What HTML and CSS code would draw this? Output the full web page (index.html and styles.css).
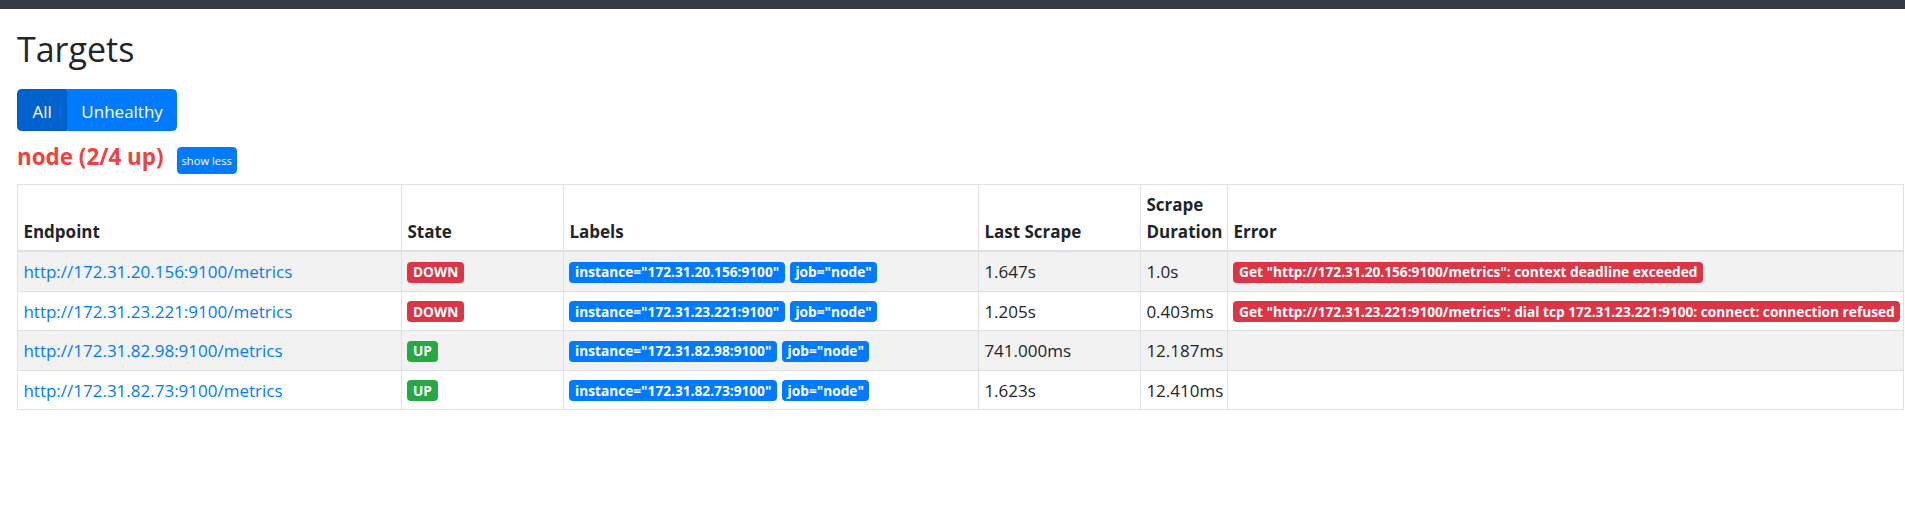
FILE: index.html
```html
<!DOCTYPE html>
<html lang="en">
<head>
<meta charset="utf-8">
<title>Targets</title>
<link rel="stylesheet" href="styles.css">
</head>
<body>
<div class="navbar"></div>
<div class="container">
  <h2 class="page-title">Targets</h2>
  <div class="btn-group">
    <button class="btn btn-active">All</button><button class="btn">Unhealthy</button>
  </div>
  <div class="pool-header">
    <span class="pool-title">node (2/4 up)</span>
    <button class="btn-xs">show less</button>
  </div>
  <table class="targets">
    <colgroup>
      <col class="c-endpoint">
      <col class="c-state">
      <col class="c-labels">
      <col class="c-last">
      <col class="c-dur">
      <col class="c-error">
    </colgroup>
    <thead>
      <tr>
        <th>Endpoint</th>
        <th>State</th>
        <th>Labels</th>
        <th>Last Scrape</th>
        <th>Scrape Duration</th>
        <th>Error</th>
      </tr>
    </thead>
    <tbody>
      <tr>
        <td><a href="#">http://172.31.20.156:9100/metrics</a></td>
        <td><span class="badge badge-danger">DOWN</span></td>
        <td><span class="badge badge-primary">instance="172.31.20.156:9100"</span><span class="badge badge-primary">job="node"</span></td>
        <td>1.647s</td>
        <td>1.0s</td>
        <td><span class="badge badge-danger">Get "http://172.31.20.156:9100/metrics": context deadline exceeded</span></td>
      </tr>
      <tr>
        <td><a href="#">http://172.31.23.221:9100/metrics</a></td>
        <td><span class="badge badge-danger">DOWN</span></td>
        <td><span class="badge badge-primary">instance="172.31.23.221:9100"</span><span class="badge badge-primary">job="node"</span></td>
        <td>1.205s</td>
        <td>0.403ms</td>
        <td><span class="badge badge-danger">Get "http://172.31.23.221:9100/metrics": dial tcp 172.31.23.221:9100: connect: connection refused</span></td>
      </tr>
      <tr>
        <td><a href="#">http://172.31.82.98:9100/metrics</a></td>
        <td><span class="badge badge-success">UP</span></td>
        <td><span class="badge badge-primary">instance="172.31.82.98:9100"</span><span class="badge badge-primary">job="node"</span></td>
        <td>741.000ms</td>
        <td>12.187ms</td>
        <td></td>
      </tr>
      <tr>
        <td><a href="#">http://172.31.82.73:9100/metrics</a></td>
        <td><span class="badge badge-success">UP</span></td>
        <td><span class="badge badge-primary">instance="172.31.82.73:9100"</span><span class="badge badge-primary">job="node"</span></td>
        <td>1.623s</td>
        <td>12.410ms</td>
        <td></td>
      </tr>
    </tbody>
  </table>
</div>
</body>
</html>
```
FILE: styles.css
```css
* { box-sizing: border-box; }

html, body {
  margin: 0;
  padding: 0;
  background: #ffffff;
}

body {
  font-family: "Open Sans", "Noto Sans", "Liberation Sans", sans-serif;
  font-size: 17px;
  line-height: 27px;
  color: #212529;
}

.navbar {
  height: 9px;
  background: #343a40;
}

.container {
  padding: 0 17px;
}

.page-title {
  margin: 20px 0 19px;
  font-size: 34px;
  line-height: 41px;
  font-weight: 400;
  color: #212529;
}

.btn-group {
  display: flex;
}

.btn {
  font-family: inherit;
  font-size: 17px;
  line-height: 27px;
  color: #ffffff;
  background: #007bff;
  border: 1px solid #007bff;
  padding: 8px 13px 5px;
  margin: 0;
  cursor: pointer;
}

.btn:first-child {
  border-radius: 4.5px 0 0 4.5px;
  padding-left: 14.5px;
  padding-right: 14.5px;
}

.btn:last-child {
  border-radius: 0 4.5px 4.5px 0;
}

.btn-active {
  background: #0062cc;
  border-color: #005cbf;
}

.pool-header {
  display: flex;
  align-items: baseline;
  gap: 13px;
  margin-top: 12px;
}

.pool-title {
  font-size: 22.4px;
  line-height: 27px;
  font-weight: 700;
  color: #f24141;
}

.btn-xs {
  font-family: inherit;
  font-size: 11.2px;
  line-height: 17px;
  padding: 4px 4px;
  color: #ffffff;
  background: #007bff;
  border: 1px solid #007bff;
  border-radius: 4px;
}

.targets {
  margin-top: 10px;
  width: 1886px;
  table-layout: fixed;
  border-collapse: collapse;
}

.c-endpoint { width: 384px; }
.c-state { width: 162px; }
.c-labels { width: 415px; }
.c-last { width: 162px; }
.c-dur { width: 87px; }
.c-error { width: 676px; }

.targets th,
.targets td {
  border: 1px solid #dee2e6;
  padding: 6px 5.4px 5.4px;
  text-align: left;
  vertical-align: top;
}

.targets th {
  font-weight: 700;
  vertical-align: bottom;
  border-bottom: 2px solid #dee2e6;
}

.targets td {
  white-space: nowrap;
}

.targets tbody tr:nth-child(odd) {
  background: #f2f2f2;
}

.targets a {
  color: #007bff;
  text-decoration: none;
}

.badge {
  display: inline-block;
  font-size: 13.7px;
  font-weight: 700;
  line-height: 14px;
  padding: 3.5px 5.6px;
  border-radius: 4px;
  color: #ffffff;
  white-space: nowrap;
  vertical-align: 1px;
  margin-right: 5px;
}

.badge:last-child {
  margin-right: 0;
}

.badge-primary { background: #007bff; }
.badge-danger { background: #dc3545; }
.badge-success { background: #28a745; }
```
